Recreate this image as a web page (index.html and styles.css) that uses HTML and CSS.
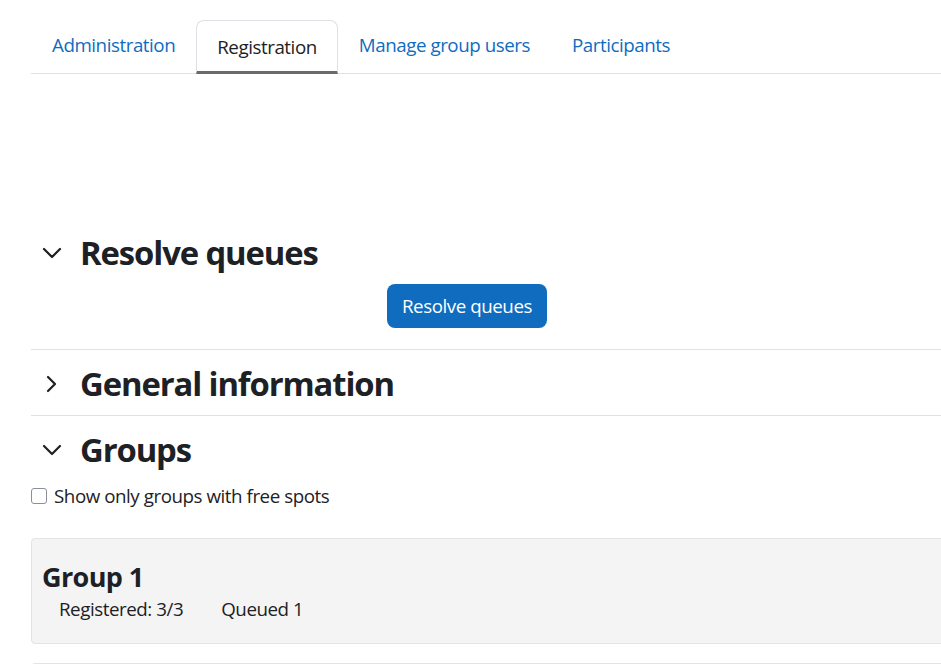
FILE: index.html
```html
<!DOCTYPE html>
<html lang="en">
<head>
<meta charset="utf-8">
<title>Registration</title>
<link rel="stylesheet" href="styles.css">
</head>
<body>
<div class="page">
  <nav class="tabs">
    <a class="tab" href="#">Administration</a>
    <a class="tab active" href="#">Registration</a>
    <a class="tab" href="#">Manage group users</a>
    <a class="tab" href="#">Participants</a>
  </nav>

  <div class="spacer"></div>

  <section class="fs">
    <div class="fs-head">
      <span class="chev"><svg width="20" height="12" viewBox="0 0 20 12"><polyline points="2,2 10,10 18,2" fill="none" stroke="#1d2125" stroke-width="2.2" stroke-linecap="round" stroke-linejoin="round"/></svg></span>
      <h3 class="fs-title">Resolve queues</h3>
    </div>
    <div class="form-row">
      <button class="btn" type="button">Resolve queues</button>
    </div>
  </section>

  <section class="fs">
    <div class="fs-head">
      <span class="chev"><svg width="12" height="18" viewBox="0 0 12 18"><polyline points="2,2 9,9 2,16" fill="none" stroke="#1d2125" stroke-width="2.2" stroke-linecap="round" stroke-linejoin="round"/></svg></span>
      <h3 class="fs-title">General information</h3>
    </div>
  </section>

  <section class="fs open">
    <div class="fs-head">
      <span class="chev"><svg width="20" height="12" viewBox="0 0 20 12"><polyline points="2,2 10,10 18,2" fill="none" stroke="#1d2125" stroke-width="2.2" stroke-linecap="round" stroke-linejoin="round"/></svg></span>
      <h3 class="fs-title">Groups</h3>
    </div>
    <label class="check-row"><input class="check" type="checkbox"><span>Show only groups with free spots</span></label>

    <div class="card">
      <h4 class="card-title">Group 1</h4>
      <div class="stats"><span>Registered: 3/3</span><span>Queued 1</span></div>
    </div>
    <div class="card next"></div>
  </section>
</div>
</body>
</html>
```

FILE: styles.css
```css
html, body {
  margin: 0;
  padding: 0;
  overflow: hidden;
  background: #ffffff;
}

body {
  font-family: "Open Sans", "Noto Sans", sans-serif;
  font-size: 18.75px;
  line-height: 28px;
  color: #1d2125;
  letter-spacing: -0.45px;
}

.page {
  width: 1200px;
  height: 664px;
  padding: 20px 0 0 31px;
  box-sizing: border-box;
  overflow: hidden;
}

/* Tabs */
.tabs {
  display: flex;
  border-bottom: 1px solid #dee2e6;
}

.tab {
  display: block;
  padding: 10px 20px 12px;
  border: 1px solid transparent;
  border-bottom: 3px solid transparent;
  margin-bottom: -1px;
  color: #0f6cbf;
  text-decoration: none;
  line-height: 28px;
}

.tab.active {
  color: #1d2125;
  padding: 12px 20px 10px;
  border-color: #dee2e6;
  border-bottom-color: #6a6a6a;
  border-radius: 8px 8px 0 0;
  background: #ffffff;
}

.spacer {
  height: 145px;
}

/* Collapsible sections */
.fs {
  padding: 14px 0 12px;
  border-bottom: 1px solid #dee2e6;
}

.fs.open {
  border-bottom: none;
  padding-bottom: 0;
}

.fs-head {
  display: flex;
  align-items: center;
  gap: 7px;
}

.chev {
  width: 42px;
  display: flex;
  justify-content: center;
  align-items: center;
}

.fs-title {
  margin: 0;
  font-size: 32.8px;
  line-height: 39px;
  font-weight: 700;
  letter-spacing: -1.1px;
}

.form-row {
  padding: 12px 0 9px 356px;
}

.btn {
  display: block;
  width: 160px;
  height: 44px;
  padding: 0;
  border: none;
  border-radius: 8px;
  background: #0f6cbf;
  color: #ffffff;
  font-family: inherit;
  font-size: 18.75px;
  letter-spacing: -0.45px;
  line-height: 28px;
}

/* Checkbox row */
.check-row {
  display: flex;
  align-items: center;
  gap: 7px;
  margin-top: 13px;
  height: 28px;
}

.check {
  appearance: none;
  -webkit-appearance: none;
  width: 16px;
  height: 16px;
  margin: 0;
  border: 1.5px solid #8a9099;
  border-radius: 3px;
  background: #fff;
  box-sizing: border-box;
}

/* Group cards */
.card {
  margin-top: 28px;
  padding: 22px 10px 20px;
  background: #f4f4f4;
  border: 1px solid #e3e3e3;
  border-radius: 4px;
}

.card.next {
  margin-top: 19px;
  height: 80px;
  padding: 0;
}

.card-title {
  margin: 0;
  font-size: 27px;
  line-height: 32px;
  font-weight: 700;
  letter-spacing: -0.6px;
}

.stats {
  display: flex;
  gap: 38px;
  margin: 2px 0 0 17px;
}
```
